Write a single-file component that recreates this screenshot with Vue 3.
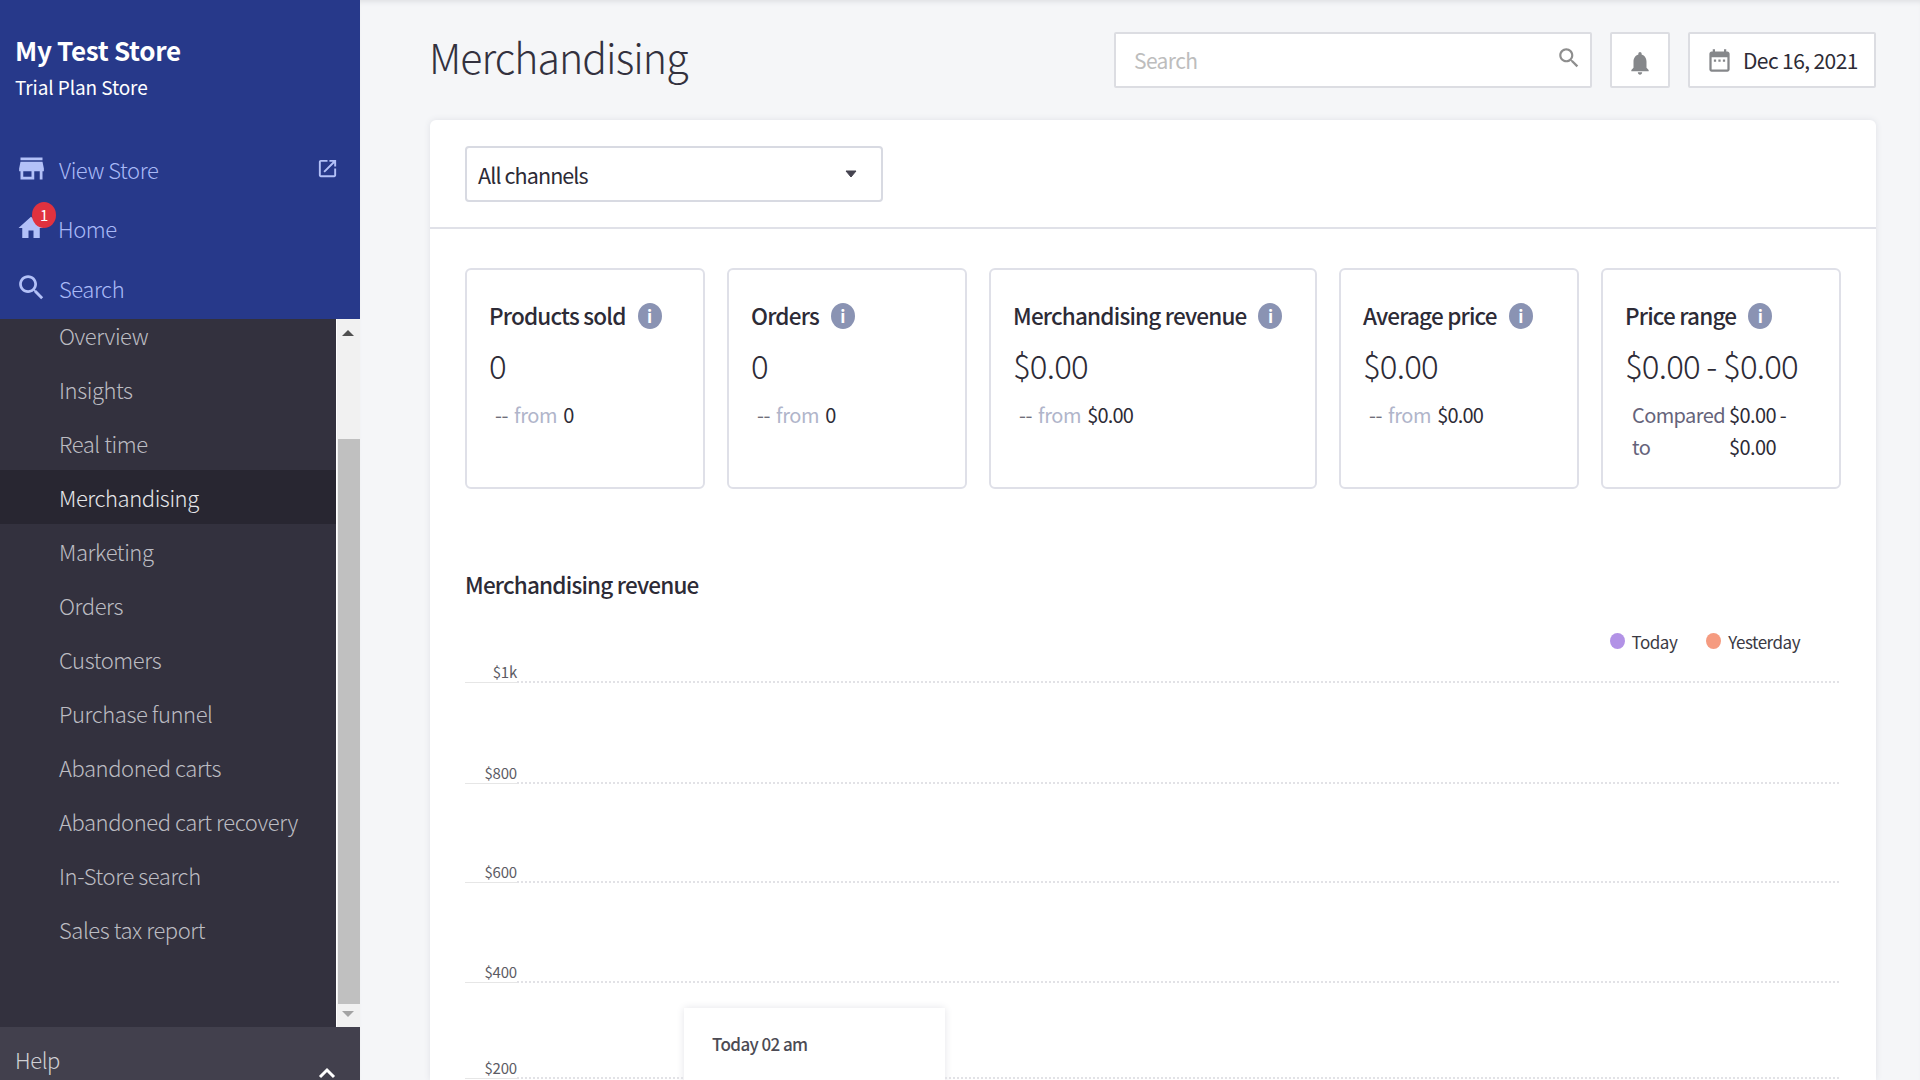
<script setup>
const navItems = ['Overview', 'Insights', 'Real time', 'Merchandising', 'Marketing', 'Orders', 'Customers', 'Purchase funnel', 'Abandoned carts', 'Abandoned cart recovery', 'In-Store search', 'Sales tax report']
const stats = [
  { title: 'Products sold', value: '0', from: '0' },
  { title: 'Orders', value: '0', from: '0' },
  { title: 'Merchandising revenue', value: '$0.00', from: '$0.00' },
  { title: 'Average price', value: '$0.00', from: '$0.00' },
  { title: 'Price range', value: '$0.00 - $0.00', range: true }
]
// the reference's ticks are not evenly spaced
const gridLines = [
  { label: '$1k', h: 17 },
  { label: '$800', h: 101 },
  { label: '$600', h: 99 },
  { label: '$400', h: 100 },
  { label: '$200', h: 96 }
]
</script>

<template>
  <div class="page">
    <aside class="sidebar">
      <div class="top">
        <div class="brand">
          <div class="store-name">My Test Store</div>
          <div class="plan">Trial Plan Store</div>
        </div>
        <a class="top-link">
          <svg class="ico" viewBox="0 0 24 24"><path d="M20 4H4v2h16V4zm1 10v-2l-1-5H4l-1 5v2h1v6h10v-6h4v6h2v-6h1zm-9 4H6v-4h6v4z"/></svg>
          <span>View Store</span>
          <svg class="ext" viewBox="0 0 24 24"><path d="M19 19H5V5h7V3H5c-1.11 0-2 .9-2 2v14c0 1.1.89 2 2 2h14c1.1 0 2-.9 2-2v-7h-2v7zM14 3v2h3.59l-9.83 9.83 1.41 1.41L19 6.41V10h2V3h-7z"/></svg>
        </a>
        <a class="top-link">
          <svg class="ico home" viewBox="0 0 24 24"><path d="M10 20v-6h4v6h5v-8h3L12 3 2 12h3v8z"/></svg>
          <b class="badge">1</b>
          <span>Home</span>
        </a>
        <a class="top-link">
          <svg class="ico" viewBox="0 0 24 24"><path d="M15.5 14h-.79l-.28-.27C15.41 12.59 16 11.11 16 9.5 16 5.91 13.09 3 9.5 3S3 5.91 3 9.5 5.91 16 9.5 16c1.61 0 3.09-.59 4.23-1.57l.27.28v.79l5 4.99L20.49 19l-4.99-5zm-6 0C7.01 14 5 11.99 5 9.5S7.01 5 9.5 5 14 7.01 14 9.5 11.99 14 9.5 14z"/></svg>
          <span>Search</span>
        </a>
      </div>
      <div class="nav-wrap">
        <ul class="nav">
          <li v-for="item in navItems" :key="item" :class="{ active: item === 'Merchandising' }">{{ item }}</li>
        </ul>
        <div class="scrollbar">
          <svg class="arrow up" viewBox="0 0 12 8"><path d="M0 7 6 1l6 6z" fill="#505050"/></svg>
          <div class="track"><div class="thumb"></div></div>
          <svg class="arrow down" viewBox="0 0 12 8"><path d="M0 1l6 6 6-6z" fill="#a3a3a3"/></svg>
        </div>
      </div>
      <div class="help">
        <span>Help</span>
        <svg class="chev" viewBox="0 0 18 12"><path d="M2 10l7-7 7 7" fill="none" stroke="#fff" stroke-width="3"/></svg>
      </div>
    </aside>

    <main class="main">
      <header class="header">
        <h1>Merchandising</h1>
        <div class="tools">
          <div class="search-box">
            <span>Search</span>
            <svg viewBox="0 0 24 24"><path d="M15.5 14h-.79l-.28-.27C15.41 12.59 16 11.11 16 9.5 16 5.91 13.09 3 9.5 3S3 5.91 3 9.5 5.91 16 9.5 16c1.61 0 3.09-.59 4.23-1.57l.27.28v.79l5 4.99L20.49 19l-4.99-5zm-6 0C7.01 14 5 11.99 5 9.5S7.01 5 9.5 5 14 7.01 14 9.5 11.99 14 9.5 14z"/></svg>
          </div>
          <div class="bell">
            <svg viewBox="0 0 24 24" preserveAspectRatio="none"><path d="M12 22c1.1 0 2-.9 2-2h-4c0 1.1.89 2 2 2zm6-6v-5c0-3.07-1.64-5.64-4.5-6.32V4c0-.83-.67-1.5-1.5-1.5s-1.5.67-1.5 1.5v.68C7.63 5.36 6 7.92 6 11v5l-2 2v1h16v-1l-2-2z"/></svg>
          </div>
          <div class="date">
            <svg viewBox="0 0 24 24"><path d="M19 4h-1V2h-2v2H8V2H6v2H5c-1.1 0-2 .9-2 2v14c0 1.1.9 2 2 2h14c1.1 0 2-.9 2-2V6c0-1.1-.9-2-2-2zm0 16H5V9h14v11zM7 11h2v2H7zm4 0h2v2h-2zm4 0h2v2h-2z"/></svg>
            <span>Dec 16, 2021</span>
          </div>
        </div>
      </header>

      <section class="panel">
        <div class="panel-head">
          <div class="select">
            <span>All channels</span>
            <svg viewBox="0 0 12 8"><path d="M1 1h10L6 7z" fill="#45434f" stroke="#45434f" stroke-linejoin="round"/></svg>
          </div>
        </div>
        <div class="panel-body">
          <div class="stats">
            <div v-for="s in stats" :key="s.title" class="stat">
              <div class="stat-title">
                <span>{{ s.title }}</span>
                <i class="info">i</i>
              </div>
              <div class="stat-value">{{ s.value }}</div>
              <div v-if="s.range" class="stat-range">
                <span class="cmp">Compared to</span>
                <span class="amt">$0.00 - $0.00</span>
              </div>
              <div v-else class="stat-from">
                <span class="dash">--</span>
                <span class="word">from</span>
                <span class="amt">{{ s.from }}</span>
              </div>
            </div>
          </div>

          <h2>Merchandising revenue</h2>
          <div class="chart">
            <div class="legend">
              <span><i class="dot today"></i>Today</span>
              <span><i class="dot yesterday"></i>Yesterday</span>
            </div>
            <div v-for="g in gridLines" :key="g.label" class="grid-row" :style="{ height: g.h + 'px' }">
              <span class="tick">{{ g.label }}</span>
              <span class="line"></span>
            </div>
            <div class="tooltip">Today 02 am</div>
          </div>
        </div>
      </section>
    </main>
  </div>
</template>

<style>
html, body { margin: 0; height: 100%; overflow: hidden; }
</style>

<style scoped>
.page {
  display: flex;
  height: 1080px;
  overflow: hidden;
  font-family: "Noto Sans CJK SC", "Noto Sans", sans-serif;
  background: #f5f6f8;
  color: #2d2b36;
}
.sidebar {
  width: 360px;
  flex: none;
  display: flex;
  flex-direction: column;
  background: #33313e;
}
.top {
  height: 319px;
  background: #27398a;
}
.brand { height: 139px; padding: 32px 0 0 15px; box-sizing: border-box; color: #fff; }
.store-name { font-size: 26px; font-weight: 700; line-height: 36px; letter-spacing: -.3px; }
.plan { font-size: 19px; line-height: 28px; margin-top: 5px; letter-spacing: -.1px; }
.top-link {
  position: relative;
  height: 59.5px;
  display: flex;
  align-items: center;
  padding: 0 21px 0 15px;
  color: #a9b9f7;
  font-size: 22px;
  font-weight: 300;
  letter-spacing: -.45px;
}
.top-link span { margin-left: 11px; }
.ico { width: 33px; height: 33px; fill: #b3c1f8; flex: none; }
.ico.home { width: 30px; height: 30px; margin: 0 1px 0 1px; }
.ext { width: 23px; height: 23px; fill: #b3c1f8; margin-left: auto; }
.badge {
  position: absolute;
  left: 32px;
  top: 3px;
  width: 24px;
  height: 26px;
  border-radius: 50%;
  background: #e0323f;
  color: #fff;
  font-size: 15px;
  line-height: 26px;
  text-align: center;
}
.nav-wrap { height: 708px; display: flex; overflow: hidden; }
.nav { flex: 1; margin: -11px 0 0; padding: 0; list-style: none; }
.nav li {
  height: 54px;
  padding: 0 0 0 59px;
  display: flex;
  align-items: center;
  color: #bcbcc2;
  font-size: 22px;
  font-weight: 300;
  letter-spacing: -.43px;
}
.nav li.active { background: #282631; color: #e6e6ea; }
.scrollbar {
  width: 24px;
  flex: none;
  display: flex;
  flex-direction: column;
  background: #f1f1f1;
  border-left: 1px solid #fff;
  box-sizing: border-box;
  align-items: center;
}
.arrow { width: 12px; height: 8px; flex: none; margin-right: 2px; }
.arrow.up { margin-top: 10px; margin-bottom: 6px; }
.arrow.down { margin-top: 7px; margin-bottom: 9px; }
.track { flex: 1; width: 100%; padding-top: 96px; box-sizing: border-box; margin-bottom: -1px; }
.thumb { height: 100%; background: #c0c0c0; margin-left: 1px; }
.help {
  flex: 1;
  background: #42404d;
  color: #d0d0d4;
  font-size: 22px;
  font-weight: 300;
  letter-spacing: -.4px;
  display: flex;
  align-items: flex-start;
  justify-content: space-between;
  padding: 16px 24px 0 15px;
}
.chev { width: 18px; height: 12px; margin-top: 24px; }

.main {
  flex: 1;
  min-width: 0;
  padding: 0 44px 0 70px;
  box-shadow: inset 0 5px 5px -3px #dfe0e4;
}
.header {
  height: 120px;
  display: flex;
  justify-content: space-between;
  align-items: flex-start;
}
h1 {
  margin: 26px 0 0 -1px;
  font-size: 41px;
  line-height: 60px;
  font-weight: 300;
  letter-spacing: -.95px;
  color: #33313e;
}
.tools { display: flex; gap: 18px; margin-top: 32px; }
.search-box, .bell, .date {
  height: 56px;
  box-sizing: border-box;
  background: #fff;
  border: 2px solid #dcdde2;
  border-radius: 2px;
  display: flex;
  align-items: center;
}
.search-box {
  width: 478px;
  padding: 0 8px 0 18px;
  justify-content: space-between;
  color: #bdbdbd;
  font-size: 21px;
  letter-spacing: -.6px;
}
.search-box svg { width: 26px; height: 26px; fill: #8e8e8e; margin-top: -5px; }
.bell { width: 60px; justify-content: center; }
.bell svg { width: 26px; height: 28px; fill: #85878a; margin-top: 6px; }
.date { width: 188px; padding-left: 16px; gap: 10px; font-size: 21px; letter-spacing: -.6px; color: #2d2b36; }
.date svg { width: 27px; height: 27px; fill: #85878a; flex: none; }
.panel {
  height: 960px;
  background: #fff;
  border-radius: 6px 6px 0 0;
  box-shadow: 0 0 6px #dfe0e6;
}
.panel-head {
  height: 109px;
  box-sizing: border-box;
  padding: 26px 0 0 35px;
  border-bottom: 2px solid #e0e1e8;
}
.select {
  width: 418px;
  height: 56px;
  box-sizing: border-box;
  border: 2px solid #d8dae2;
  border-radius: 4px;
  display: flex;
  align-items: center;
  justify-content: space-between;
  padding: 0 24px 0 11px;
  font-size: 21.5px;
  letter-spacing: -.9px;
}
.select svg { width: 12px; height: 8px; overflow: visible; }
.panel-body { padding: 39px 35px 0; }
.stats {
  display: grid;
  grid-template-columns: 240px 240px 328px 240px 240px;
  gap: 22px;
}
.stat {
  height: 221px;
  box-sizing: border-box;
  border: 2px solid #dfe0e8;
  border-radius: 6px;
  padding: 27px 10px 0 22px;
}
.stat-title { display: flex; align-items: center; gap: 12px; font-size: 22.5px; font-weight: 500; letter-spacing: -.8px; line-height: 36px; white-space: nowrap; }
.info {
  width: 24px;
  height: 26px;
  border-radius: 50%;
  background: #8a93b3;
  color: #fff;
  font-size: 17px;
  font-weight: 700;
  font-style: normal;
  line-height: 26px;
  letter-spacing: 0;
  text-align: center;
  flex: none;
  margin-top: 2px;
}
.stat-value { font-size: 33px; font-weight: 300; letter-spacing: -.8px; line-height: 48px; margin-top: 8px; white-space: nowrap; }
.stat-from { display: flex; gap: 6px; margin: 10px 0 0 6px; font-size: 20px; letter-spacing: -.4px; line-height: 32px; }
.stat-from .amt { letter-spacing: -.8px; }
.dash { color: #6f6e79; }
.word { color: #b0b5ca; }
.stat-range { display: grid; grid-template-columns: 97px 74px; margin: 10px 0 0 7px; font-size: 20px; letter-spacing: -.6px; line-height: 32px; }
.cmp { color: #65637a; }
h2 {
  margin: 77px 0 0;
  font-size: 22.5px;
  font-weight: 500;
  letter-spacing: -.8px;
  line-height: 36px;
}
.chart { position: relative; margin-top: 14px; }
.legend {
  height: 50px;
  display: flex;
  justify-content: flex-end;
  gap: 29px;
  padding: 0 41px 0 0;
  font-size: 17px;
  letter-spacing: -.5px;
  color: #3b3a44;
  align-items: center;
}
.legend span { display: flex; align-items: center; gap: 7px; }
.dot { width: 15px; height: 16px; border-radius: 50%; }
.today { background: #b292e6; }
.yesterday { background: #f59b80; }
.grid-row {
  display: flex;
  align-items: flex-end;
}
.tick {
  width: 52px;
  flex: none;
  text-align: right;
  border-bottom: 1px solid #e6e6e6;
  font-size: 15px;
  letter-spacing: -.2px;
  line-height: 20px;
  color: #5c5b64;
}
.line { flex: 1; border-bottom: 2px dotted #e2e2e6; margin-right: 2px; }
.tooltip {
  position: absolute;
  left: 219px;
  top: 392px;
  width: 261px;
  height: 200px;
  box-sizing: border-box;
  padding: 23px 28px;
  background: #fff;
  box-shadow: 0 0 8px #e4e4e8;
  font-size: 17px;
  font-weight: 500;
  letter-spacing: -.6px;
  color: #4c4b54;
}
</style>
